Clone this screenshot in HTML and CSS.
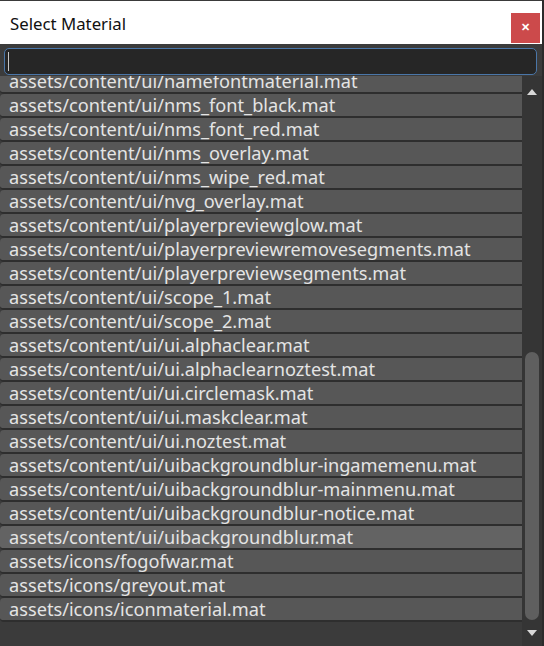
FILE: index.html
```html
<!DOCTYPE html>
<html lang="en">
<head>
  <meta charset="UTF-8">
  <meta name="viewport" content="width=device-width, initial-scale=1.0">
  <title>Select Material</title>
  <link rel="stylesheet" href="styles.css">
</head>
<body>

  <div class="window">
    <!-- Title Bar -->
    <div class="titlebar">
      <span class="title">Select Material</span>
      <button class="close-btn">&#x2715;</button>
    </div>

    <!-- Search -->
    <div class="search">
      <div class="search-box"><span class="caret"></span></div>
    </div>

    <!-- Material List -->
    <div class="content">
      <div class="list">
        <div class="list-inner">
          <div class="row">assets/content/ui/namefontmaterial.mat</div>
          <div class="row">assets/content/ui/nms_font_black.mat</div>
          <div class="row">assets/content/ui/nms_font_red.mat</div>
          <div class="row">assets/content/ui/nms_overlay.mat</div>
          <div class="row">assets/content/ui/nms_wipe_red.mat</div>
          <div class="row">assets/content/ui/nvg_overlay.mat</div>
          <div class="row">assets/content/ui/playerpreviewglow.mat</div>
          <div class="row">assets/content/ui/playerpreviewremovesegments.mat</div>
          <div class="row">assets/content/ui/playerpreviewsegments.mat</div>
          <div class="row">assets/content/ui/scope_1.mat</div>
          <div class="row">assets/content/ui/scope_2.mat</div>
          <div class="row">assets/content/ui/ui.alphaclear.mat</div>
          <div class="row">assets/content/ui/ui.alphaclearnoztest.mat</div>
          <div class="row">assets/content/ui/ui.circlemask.mat</div>
          <div class="row">assets/content/ui/ui.maskclear.mat</div>
          <div class="row">assets/content/ui/ui.noztest.mat</div>
          <div class="row">assets/content/ui/uibackgroundblur-ingamemenu.mat</div>
          <div class="row">assets/content/ui/uibackgroundblur-mainmenu.mat</div>
          <div class="row">assets/content/ui/uibackgroundblur-notice.mat</div>
          <div class="row hover">assets/content/ui/uibackgroundblur.mat</div>
          <div class="row">assets/icons/fogofwar.mat</div>
          <div class="row">assets/icons/greyout.mat</div>
          <div class="row">assets/icons/iconmaterial.mat</div>
        </div>
      </div>

      <!-- Scrollbar -->
      <div class="scrollbar">
        <span class="arrow up"></span>
        <div class="track">
          <div class="thumb"></div>
        </div>
        <span class="arrow down"></span>
      </div>
    </div>
  </div>

</body>
</html>
```

FILE: styles.css
```css
body {
  font-family: 'Noto Sans', 'Open Sans', sans-serif;
  background-color: #3b3b3b;
  margin: 0;
  width: 544px;
  height: 646px;
  overflow: hidden;
}
.window {
  display: flex;
  flex-direction: column;
  height: 646px;
  border-right: 2px solid #2b2b2b;
  box-sizing: border-box;
}
.titlebar {
  height: 44px;
  box-sizing: border-box;
  background-color: #ffffff;
  border-top: 1px solid #3a3a3a;
  display: flex;
  align-items: center;
  justify-content: space-between;
  padding: 0 2px 0 10px;
}
.title {
  font-size: 16.8px;
  color: #111;
  margin-top: 1px;
}
.close-btn {
  width: 29px;
  height: 30px;
  margin-top: 10px;
  background-color: #cc4a4b;
  color: white;
  border: none;
  font-size: 11px;
  font-weight: bold;
  padding: 0;
  display: flex;
  align-items: center;
  justify-content: center;
}
.search {
  padding: 4px 5px 1px 4px;
}
.search-box {
  height: 27px;
  box-sizing: border-box;
  background-color: #262626;
  border: 1.5px solid #4a76a8;
  border-radius: 5px;
  display: flex;
  align-items: center;
  padding-left: 3px;
}
.caret {
  width: 1px;
  height: 19px;
  background-color: #c8c8c8;
}
.content {
  flex: 1;
  display: flex;
  overflow: hidden;
}
.list {
  flex: 1;
  overflow: hidden;
}
.list-inner {
  margin-top: -6px;
}
.row {
  height: 22px;
  line-height: 22px;
  box-sizing: content-box;
  border-bottom: 2px solid #2e2e2e;
  background-color: #575757;
  border-radius: 4px 0 0 4px;
  padding-left: 9px;
  color: #e4e4e4;
  font-size: 18.2px;
  white-space: nowrap;
}
.row.hover {
  background-color: #636363;
}
.scrollbar {
  width: 20px;
  background-color: #353535;
  display: flex;
  flex-direction: column;
  align-items: center;
}
.arrow {
  width: 0;
  height: 0;
  border-left: 5px solid transparent;
  border-right: 5px solid transparent;
}
.arrow.up {
  margin-top: 13px;
  border-bottom: 6px solid #d8d8d8;
}
.arrow.down {
  margin: 0 0 10px;
  border-top: 6px solid #d8d8d8;
}
.track {
  flex: 1;
  width: 100%;
  display: flex;
  flex-direction: column;
  align-items: center;
}
.thumb {
  width: 14px;
  height: 268px;
  margin-top: 257px;
  background-color: #5f5f5f;
  border-radius: 7px;
}
```
